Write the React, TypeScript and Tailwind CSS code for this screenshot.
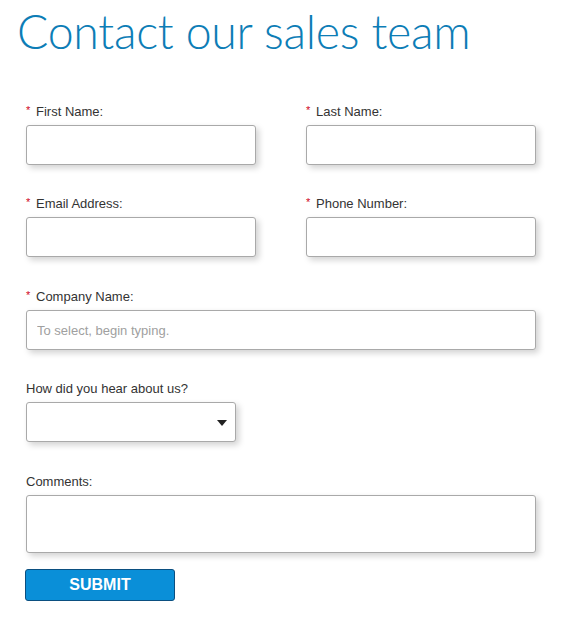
import { ReactNode } from 'react';

function Label({ children, required }: { children: ReactNode; required?: boolean }) {
  return (
    <label className="flex items-start h-[18px] text-[13px] leading-[18px] text-[#333] mb-[4px]">
      {required && <span className="text-[#d0021b] text-[11px] leading-[14px] w-[10px]">*</span>}
      <span>{children}</span>
    </label>
  );
}

const boxClass =
  'block w-full h-[40px] bg-white border border-[#a9a9a9] rounded-[3px] shadow-[3px_3px_6px_rgba(0,0,0,0.18)] px-[10px] text-[13px] outline-none';

export default function App() {
  return (
    <div className="min-h-screen bg-white font-['Liberation_Sans',Arial,sans-serif]">
      <h1 className="pl-[17px] pt-[3px] text-[46.5px] leading-[56px] font-light text-[#0d7db6] font-['Lato','Open_Sans',sans-serif] tracking-[-0.3px]">
        Contact our sales team
      </h1>

      <form className="pl-[26px] pt-[44px] w-[536px]">
        <div className="grid grid-cols-[230px_230px] gap-x-[50px] gap-y-[30px]">
          <div>
            <Label required>First Name:</Label>
            <input className={boxClass} />
          </div>
          <div>
            <Label required>Last Name:</Label>
            <input className={boxClass} />
          </div>
          <div>
            <Label required>Email Address:</Label>
            <input className={boxClass} />
          </div>
          <div>
            <Label required>Phone Number:</Label>
            <input className={boxClass} />
          </div>
        </div>

        <div className="mt-[31px]">
          <Label required>Company Name:</Label>
          <input className={`${boxClass} placeholder:text-[#a0a0a0]`} placeholder="To select, begin typing." />
        </div>

        <div className="mt-[30px] w-[210px]">
          <Label>How did you hear about us?</Label>
          <div className={`${boxClass} relative`}>
            <svg className="absolute right-[8px] top-[17px]" width="10" height="6" viewBox="0 0 10 6">
              <path d="M0 0h10L5 6z" fill="#222" />
            </svg>
          </div>
        </div>

        <div className="mt-[31px]">
          <Label>Comments:</Label>
          <textarea className={`${boxClass} h-[58px] resize-none`} />
        </div>

        <button
          type="button"
          className="mt-[16px] -ml-[1px] w-[150px] h-[32px] bg-[#0a8fd8] border border-[#0b4f80] rounded-[3px] text-white font-bold text-[16px]"
        >
          SUBMIT
        </button>
      </form>
    </div>
  );
}
